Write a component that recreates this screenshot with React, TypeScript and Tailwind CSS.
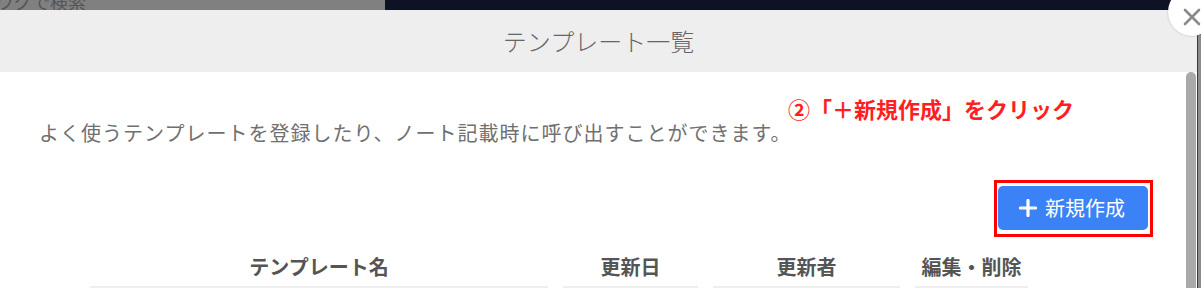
import React from 'react'

const font = { fontFamily: '"Noto Sans CJK JP", "Noto Sans", sans-serif' }

const columns = [
  { label: 'テンプレート名', width: 'w-[458px]' },
  { label: '更新日', width: 'w-[135px]' },
  { label: '更新者', width: 'w-[187px]' },
  { label: '編集・削除', width: 'w-[113px]' },
]

function PlusIcon() {
  return (
    <svg width="18" height="18" viewBox="0 0 18 18" className="shrink-0">
      <path d="M9 1.5v15M1.5 9h15" stroke="white" strokeWidth="3.2" strokeLinecap="round" />
    </svg>
  )
}

function CloseButton() {
  return (
    <button className="absolute left-[1168px] top-[-12px] flex h-[48px] w-[48px] items-center justify-center rounded-full bg-white shadow-[0_0_2px_rgba(0,0,0,0.25)]">
      <svg width="18" height="18" viewBox="0 0 18 18" className="mt-[10px] mr-[1px]">
        <path d="M2 2l14 14M16 2L2 16" stroke="#8a8a8a" strokeWidth="2.6" strokeLinecap="round" />
      </svg>
    </button>
  )
}

export default function App() {
  return (
    <div className="relative h-[288px] w-[1201px] overflow-hidden bg-[#0d1324]" style={font}>
      {/* 背景ページの検索欄 (上端のみ見える) */}
      <div className="flex h-[10px]">
        <div className="h-full w-[385px] overflow-hidden bg-[#808080]">
          <div className="-ml-[4px] -mt-[8px] text-[18px] leading-none text-[#555]">ワグで検索</div>
        </div>
        <div className="flex-1" />
      </div>

      <div className="flex h-[278px]">
        {/* モーダル */}
        <div className="flex w-[1197px] flex-col bg-white">
          <div className="flex h-[62px] shrink-0 items-center justify-center bg-[#eeeeee]">
            <h2 className="text-[24px] font-light leading-none text-[#666]">テンプレート一覧</h2>
          </div>

          <div className="flex min-h-0 flex-1">
            <div className="flex-1 pl-[39px] pt-[46px]">
              <p className="text-[20px] leading-[30px] tracking-[1px] text-[#707070]">
                よく使うテンプレートを登録したり、ノート記載時に呼び出すことができます。
              </p>

              <div className="mt-[32px] flex justify-end pr-[33px]">
                <div className="border-[3px] border-[#ff0000] pb-[4px] pl-[1px] pr-[2px] pt-[3px]">
                  <button className="flex h-[44px] w-[150px] items-center justify-center gap-[8px] rounded-[5px] bg-[#3b82f6] pr-[2px] text-[20px] leading-none text-white">
                    <PlusIcon />
                    新規作成
                  </button>
                </div>
              </div>

              <table className="ml-[36px] mt-[10px] border-separate border-spacing-x-[15px] border-spacing-y-0">
                <thead>
                  <tr>
                    {columns.map((c) => (
                      <th
                        key={c.label}
                        className={`${c.width} border-b-2 border-[#eeeeee] pb-[9px] pt-[10px] text-center text-[20px] font-bold leading-[20px] text-[#555]`}
                      >
                        {c.label}
                      </th>
                    ))}
                  </tr>
                </thead>
              </table>
            </div>

            {/* スクロールバー */}
            <div className="w-[11px] shrink-0 pr-[1px]">
              <div className="h-full w-[10px] rounded-t-full bg-[#a9a9a9]" />
            </div>
          </div>
        </div>

        {/* 右端の背景 */}
        <div className="flex flex-1 pt-[25px]">
          <div className="w-[1px] bg-[#3a3a3a]" />
          <div className="flex-1 bg-[#8c8c8c]" />
        </div>
      </div>

      {/* 注釈 */}
      <div className="absolute left-[788px] top-[94px] text-[22px] font-bold leading-[28px] text-[#ff1f1f]">
        ②「＋新規作成」をクリック
      </div>

      <CloseButton />
    </div>
  )
}
